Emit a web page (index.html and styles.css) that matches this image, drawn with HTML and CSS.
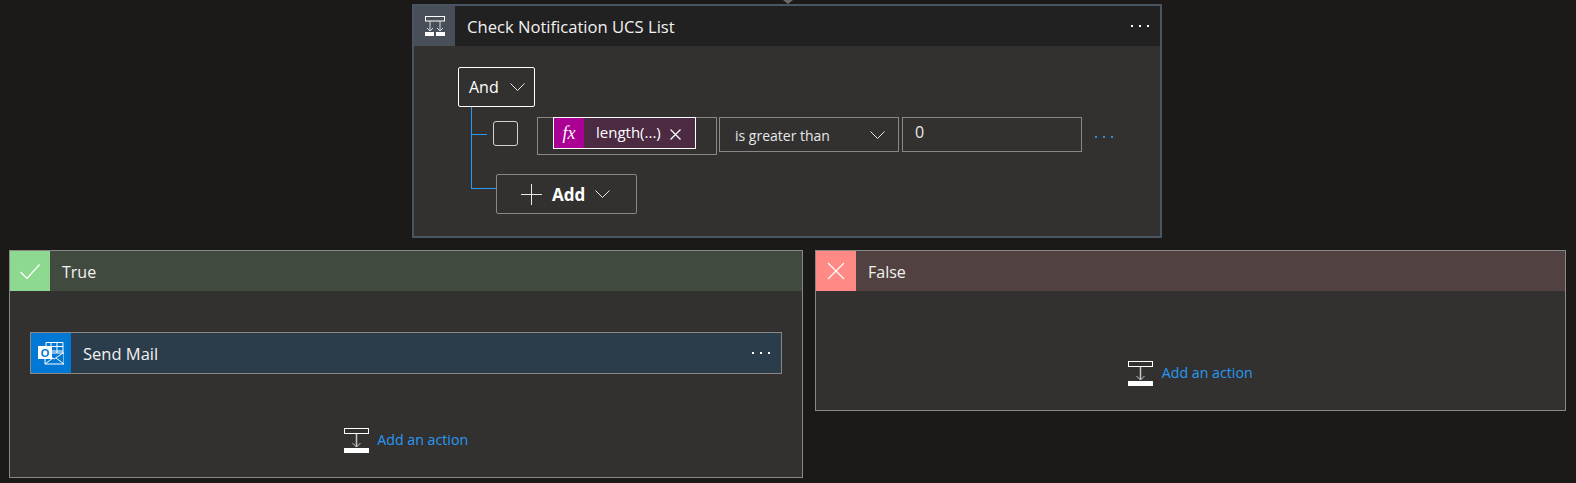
FILE: index.html
```html
<!DOCTYPE html>
<html lang="en">
<head>
<meta charset="utf-8">
<title>Condition</title>
<link rel="stylesheet" href="styles.css">
</head>
<body>
<main class="canvas">
  <div class="arrow"></div>
  <section class="card condition">
    <header class="head head-dark">
      <span class="icon icon-cond">
        <svg width="20" height="20" viewBox="0 0 20 20" fill="none" stroke="#fff"><rect x=".5" y=".5" width="19" height="4.500"/><path d="M5 5v10M2 12l3 3 3-3M15 5v10M12 12l3 3 3-3" stroke="#d8d8d8"/><rect x="0" y="16" width="9" height="4" fill="#fff" stroke="none"/><rect x="11" y="16" width="9" height="4" fill="#fff" stroke="none"/></svg>
      </span>
      <span class="title title-main">Check Notification UCS List</span>
      <span class="dots"><i></i><i></i><i></i></span>
    </header>
    <div class="body">
      <button class="and">And
        <svg class="chev" width="15" height="8" viewBox="0 0 15 8" fill="none" stroke="#e8e8e8"><path d="M.5.5l7 7 7-7"/></svg>
      </button>
      <div class="tree">
        <div class="row">
          <span class="check"></span>
          <div class="field">
            <span class="token">
              <span class="fx">fx</span>
              <span class="token-text">length(...)</span>
              <svg class="token-x" width="11" height="11" viewBox="0 0 11 11" stroke="#fff" stroke-width="1.300"><path d="M.5.5l10 10M10.500.5l-10 10"/></svg>
            </span>
          </div>
          <div class="select">is greater than
            <svg class="chev" width="15" height="8" viewBox="0 0 15 8" fill="none" stroke="#e8e8e8"><path d="M.5.5l7 7 7-7"/></svg>
          </div>
          <div class="input">0</div>
          <span class="dots dots-blue"><i></i><i></i><i></i></span>
        </div>
        <button class="add">
          <svg width="21" height="21" viewBox="0 0 21 21" stroke="#e8e8e8"><path d="M10.500 0v21M0 10.500h21"/></svg>
          <b>Add</b>
          <svg class="chev" width="15" height="8" viewBox="0 0 15 8" fill="none" stroke="#e8e8e8"><path d="M.5.5l7 7 7-7"/></svg>
        </button>
      </div>
    </div>
  </section>
  <div class="branches">
    <section class="card branch branch-true">
      <header class="head head-true">
        <span class="icon icon-true">
          <svg width="20" height="15" viewBox="0 0 20 15" fill="none" stroke="#fff" stroke-width="1.200"><path d="M.5 8l6.500 6.500L19.500.5"/></svg>
        </span>
        <span class="title">True</span>
      </header>
      <div class="mail">
        <span class="icon-mail">
          <svg width="26" height="24" viewBox="0 0 26 24"><path d="M8 1.500h17v13H8z" fill="#0078d4" stroke="#fff"/><path d="M13 1.500v13M19 1.500v13M8 5.500h17M8 10h17" stroke="#fff" fill="none"/><path d="M7 12h19v11H7z" fill="#0078d4" stroke="#fff"/><path d="M7 12l9 6 9-6M7 23l8-6M26 23l-8-6" stroke="#fff" fill="none"/><rect x="0" y="5" width="14" height="13" fill="#fff"/><text x="7" y="15.500" class="mail-o">O</text></svg>
        </span>
        <span class="title title-mail">Send Mail</span>
        <span class="dots"><i></i><i></i><i></i></span>
      </div>
      <div class="action">
        <svg class="add-ic" width="25" height="25" viewBox="0 0 25 25" fill="none" stroke="#fff"><rect x=".5" y=".5" width="24" height="5"/><path d="M12.500 6v13" stroke="#c8c8c8" stroke-width="1.500"/><path d="M8.500 15l4 4 4-4" stroke="#c8c8c8"/><rect y="20" width="25" height="5" fill="#fff" stroke="none"/></svg>
        <span>Add an action</span>
      </div>
    </section>
    <section class="card branch branch-false">
      <header class="head head-false">
        <span class="icon icon-false">
          <svg width="18" height="18" viewBox="0 0 18 18" stroke="#fff" stroke-width="1.100"><path d="M1 1l16 16M17 1L1 17"/></svg>
        </span>
        <span class="title">False</span>
      </header>
      <div class="action action-false">
        <svg class="add-ic" width="25" height="25" viewBox="0 0 25 25" fill="none" stroke="#fff"><rect x=".5" y=".5" width="24" height="5"/><path d="M12.500 6v13" stroke="#c8c8c8" stroke-width="1.500"/><path d="M8.500 15l4 4 4-4" stroke="#c8c8c8"/><rect y="20" width="25" height="5" fill="#fff" stroke="none"/></svg>
        <span>Add an action</span>
      </div>
    </section>
  </div>
</main>
</body>
</html>
```
FILE: styles.css
```css
* { box-sizing: border-box; }
html, body { margin: 0; height: 483px; overflow: hidden; }
body { background: #1b1a19; color: #fff; font: 15px "Open Sans", "Noto Sans", sans-serif; }
button { font: inherit; color: inherit; background: none; }

.canvas { position: relative; display: flex; flex-direction: column; height: 483px; padding-top: 4px; }
.arrow { position: absolute; left: 783px; top: 0; border: 5px solid transparent; border-top: 4px solid #6a6a6a; border-bottom: 0; }

.card { background: #323130; }
.condition { width: 750px; height: 234px; margin-left: 412px; border: 2px solid #4a5562; }

.head { display: flex; align-items: center; height: 40px; }
.head-dark { background: #212121; }
.head-true { background: #404a3e; }
.head-false { background: #514140; }
.icon { display: flex; align-items: center; justify-content: center; width: 40px; height: 40px; }
.icon-cond { width: 41px; background: #484f58; }
.icon-true { background: #8cd98f; }
.icon-false { background: #ff8a85; }
.title { flex: 1; padding: 1px 0 0 12px; font-size: 16px; color: #f3f2f1; }
.title-main { font-size: 16.600px; }
.title-mail { font-size: 16.500px; }

.dots { display: flex; gap: 6px; padding-right: 11px; }
.dots i { width: 2px; height: 2px; background: #fff; }
.dots-blue { align-self: flex-start; margin: 19px 0 0 13px; padding: 0; }
.dots-blue i { background: #2a8fe6; }

.body { padding: 21px 0 0 44px; }
.and { display: flex; align-items: center; gap: 11px; width: 77px; height: 40px; padding: 0 0 0 10px; background: #323130; border: 1px solid #fff; border-radius: 2px; font-size: 16px; }

.tree { position: relative; padding: 10px 0 0 35px; }
.tree::before { content: ""; position: absolute; left: 13px; top: 0; width: 1px; height: 81px; background: #2899f5; }

.row { position: relative; display: flex; align-items: flex-start; height: 57px; }
.row::before { content: ""; position: absolute; left: -22px; top: 17px; width: 16px; height: 1px; background: #2899f5; }
.check { width: 25px; height: 25px; margin-top: 4px; border: 1px solid #d2d0ce; border-radius: 3px; }
.field { display: flex; width: 180px; height: 38px; margin-left: 19px; padding-left: 15px; border: 1px solid #8a8886; }
.token { display: flex; align-items: center; width: 143px; height: 32px; margin-top: -1px; border: 1px solid #fff; background: #4b2a42; font-size: 15px; }
.fx { display: flex; align-items: center; justify-content: center; width: 30px; height: 30px; background: #aa0093; font: italic 18px "Liberation Serif", serif; }
.token-text { padding: 0 9px 3px 12px; white-space: nowrap; }
.token-x { margin-top: 3px; }
.select, .input { height: 35px; border: 1px solid #8a8886; color: #e8e8e8; }
.select { display: flex; align-items: center; justify-content: space-between; width: 180px; margin-left: 2px; padding: 1px 13px 0 15px; font-size: 14px; }
.input { width: 180px; margin-left: 3px; padding: 3px 12px; font-size: 16px; }

.add { position: relative; display: flex; align-items: center; width: 141px; height: 40px; margin-left: 3px; padding: 0 0 0 24px; border: 1px solid #8a8886; border-radius: 2px; font-size: 17px; }
.add b { margin: 0 10px 0 10px; }
.add::before { content: ""; position: absolute; left: -26px; top: 13px; width: 25px; height: 1px; background: #2899f5; }

.branches { display: flex; align-items: flex-start; gap: 12px; margin: 12px 0 0 9px; }
.branch { border: 1px solid #8a8886; }
.branch-true { width: 794px; height: 228px; }
.branch-false { width: 751px; height: 161px; }

.mail { display: flex; align-items: center; width: 752px; height: 42px; margin: 41px 0 0 20px; background: #2b3c4a; border: 1px solid #8a8886; }
.icon-mail { display: flex; align-items: center; justify-content: center; width: 40px; height: 40px; background: #0078d4; }
.mail-o { font: bold 11px "Liberation Sans", sans-serif; fill: #0078d4; text-anchor: middle; }

.action { display: flex; align-items: center; justify-content: center; gap: 8.500px; margin-top: 52px; font-size: 14.200px; color: #2899f5; }
.action-false { margin-top: 68px; }
.add-ic { flex: none; margin-top: 2px; }
```
